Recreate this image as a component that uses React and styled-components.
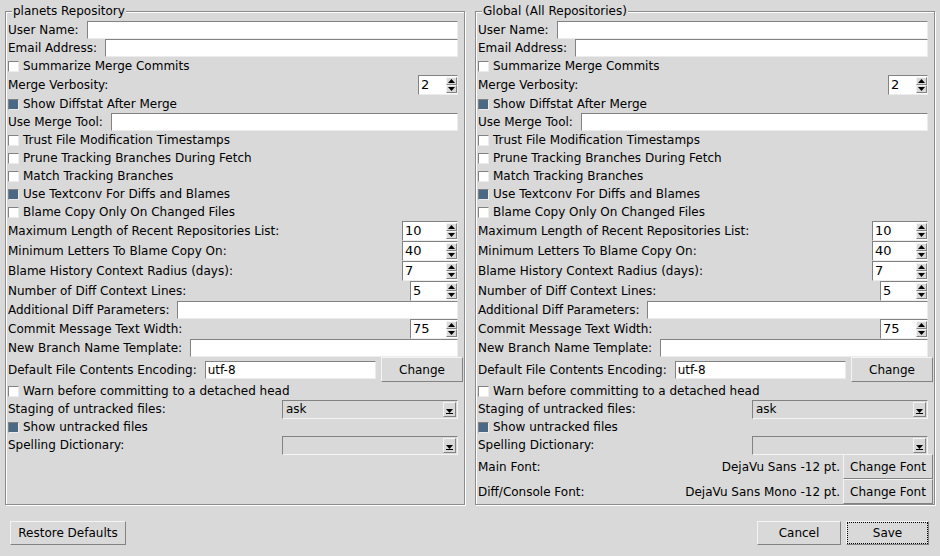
import React from 'react';
import styled, { createGlobalStyle } from 'styled-components';

const GlobalStyle = createGlobalStyle`
  html, body {
    margin: 0;
    padding: 0;
    background: #d9d9d9;
  }
  body {
    font-family: "DejaVu Sans", "Liberation Sans", sans-serif;
    font-size: 12px;
    color: #000;
  }
`;

const Window = styled.div`
  width: 940px;
  height: 556px;
  display: flex;
  flex-direction: column;
  background: #d9d9d9;
  overflow: hidden;
`;

const Panels = styled.div`
  display: flex;
  gap: 10px;
  padding: 11px 0 0 5px;
`;

const Frame = styled.div`
  position: relative;
  box-sizing: border-box;
  width: 460px;
  height: 494px;
  border: 1px solid #8c8c8c;
  box-shadow: 1px 1px 0 #fff, inset 1px 1px 0 #fff;
  padding: 9px 6px 0 2px;
  display: flex;
  flex-direction: column;
`;

const FrameTitle = styled.span`
  position: absolute;
  top: -8px;
  left: 6px;
  padding: 0 1px;
  line-height: 15px;
  background: #d9d9d9;
  white-space: nowrap;
`;

const Row = styled.div`
  display: flex;
  align-items: center;
  height: ${p => p.h}px;
  flex: none;
`;

const Label = styled.span`
  white-space: nowrap;
  flex: ${p => (p.grow ? 1 : 'none')};
  text-align: ${p => (p.right ? 'right' : 'left')};
  padding-right: ${p => (p.right ? 3 : 0)}px;
`;

const Entry = styled.div`
  flex: ${p => (p.w ? 'none' : 1)};
  width: ${p => (p.w ? `${p.w}px` : 'auto')};
  box-sizing: border-box;
  height: 18px;
  margin-left: 8px;
  background: #fff;
  border: 1px solid;
  border-color: #828282 #ececec #ececec #828282;
  padding-left: 2px;
  line-height: 16px;
`;

const CheckRow = styled.label`
  display: flex;
  align-items: center;
  height: ${p => p.h}px;
  flex: none;
`;

const Box = styled.span`
  box-sizing: border-box;
  width: 11px;
  height: 11px;
  margin: 1px 4px 0 0;
  border: 1px solid;
  border-color: #828282 #ececec #ececec #828282;
  background: ${p => (p.on ? '#4a6984' : '#fff')};
`;

const SpinBox = styled.div`
  margin-left: auto;
  box-sizing: border-box;
  width: ${p => p.w}px;
  height: 20px;
  display: flex;
  background: #fff;
  border: 1px solid;
  border-color: #828282 #ececec #ececec #828282;
`;

const SpinValue = styled.span`
  flex: 1;
  padding-left: 2px;
  font-size: 13px;
  line-height: 18px;
`;

const SpinArrows = styled.div`
  width: 11px;
  display: flex;
  flex-direction: column;
  padding: 1px 0;
`;

const ArrowBtn = styled.div`
  flex: 1;
  box-sizing: border-box;
  background: #d9d9d9;
  border: 1px solid;
  border-color: #f4f4f4 #828282 #828282 #f4f4f4;
  display: flex;
  align-items: center;
  justify-content: center;
`;

const Combo = styled.div`
  margin-left: auto;
  box-sizing: border-box;
  width: 176px;
  height: 19px;
  display: flex;
  align-items: stretch;
  border: 1px solid;
  border-color: #828282 #f4f4f4 #f4f4f4 #828282;
  background: #d9d9d9;
`;

const ComboValue = styled.span`
  flex: 1;
  padding-left: 3px;
  line-height: 17px;
`;

const ComboArrow = styled.div`
  width: 13px;
  box-sizing: border-box;
  margin: 1px 1px 1px 0;
  border: 1px solid;
  border-color: #f4f4f4 #828282 #828282 #f4f4f4;
  display: flex;
  align-items: flex-end;
  justify-content: center;
  padding-bottom: 2px;
`;

const Button = styled.button`
  box-sizing: border-box;
  width: ${p => p.w}px;
  height: ${p => p.h || 25}px;
  margin: ${p => p.m || 0};
  padding: 0;
  font: inherit;
  color: #000;
  background: #d9d9d9;
  border: 1px solid;
  border-color: #f4f4f4 #828282 #828282 #f4f4f4;
  outline: ${p => (p.focus ? '1px dotted #000' : 'none')};
  outline-offset: -2px;
  flex: none;
`;

const BottomBar = styled.div`
  display: flex;
  align-items: center;
  margin-top: 16px;
  padding: 0 11px 0 10px;
`;

const Spacer = styled.div`
  flex: 1;
`;

const RightButtons = styled.div`
  display: flex;
  gap: 5px;
`;

const Up = () => (
  <svg width="7" height="4" viewBox="0 0 7 4"><path d="M3.5 0 L7 4 L0 4 Z" fill="#000" /></svg>
);
const Down = () => (
  <svg width="7" height="4" viewBox="0 0 7 4"><path d="M0 0 L7 0 L3.5 4 Z" fill="#000" /></svg>
);
const ComboDown = () => (
  <svg width="7" height="5" viewBox="0 0 7 5"><path d="M0 0 L7 0 L3.5 4 Z M0 4 H7 V5 H0 Z" fill="#000" /></svg>
);

const Spin = ({ label, value, w }) => (
  <Row h={20}>
    <Label>{label}</Label>
    <SpinBox w={w}>
      <SpinValue>{value}</SpinValue>
      <SpinArrows>
        <ArrowBtn><Up /></ArrowBtn>
        <ArrowBtn><Down /></ArrowBtn>
      </SpinArrows>
    </SpinBox>
  </Row>
);

const Field = ({ label }) => (
  <Row h={18}>
    <Label>{label}</Label>
    <Entry />
  </Row>
);

const Check = ({ label, on, h = 18 }) => (
  <CheckRow h={h}>
    <Box on={on} />
    <span>{label}</span>
  </CheckRow>
);

const Select = ({ label, value, h = 18 }) => (
  <Row h={h}>
    <Label>{label}</Label>
    <Combo>
      <ComboValue>{value}</ComboValue>
      <ComboArrow><ComboDown /></ComboArrow>
    </Combo>
  </Row>
);

const Encoding = () => (
  <Row h={25}>
    <Label>Default File Contents Encoding:</Label>
    <Entry>utf-8</Entry>
    <Button w={82} m="0 -5px 0 5px">Change</Button>
  </Row>
);

const FontRow = ({ label, font }) => (
  <Row h={25}>
    <Label>{label}</Label>
    <Label grow right>{font}</Label>
    <Button w={90} m="0 -5px 0 0">Change Font</Button>
  </Row>
);

const Options = ({ global }) => (
  <>
    <Field label="User Name:" />
    <Field label="Email Address:" />
    <Check label="Summarize Merge Commits" />
    <Spin label="Merge Verbosity:" value="2" w={40} />
    <Check label="Show Diffstat After Merge" on />
    <Field label="Use Merge Tool:" />
    <Check label="Trust File Modification Timestamps" />
    <Check label="Prune Tracking Branches During Fetch" />
    <Check label="Match Tracking Branches" />
    <Check label="Use Textconv For Diffs and Blames" on />
    <Check label="Blame Copy Only On Changed Files" />
    <Spin label="Maximum Length of Recent Repositories List:" value="10" w={56} />
    <Spin label="Minimum Letters To Blame Copy On:" value="40" w={56} />
    <Spin label="Blame History Context Radius (days):" value="7" w={56} />
    <Spin label="Number of Diff Context Lines:" value="5" w={48} />
    <Field label="Additional Diff Parameters:" />
    <Spin label="Commit Message Text Width:" value="75" w={48} />
    <Field label="New Branch Name Template:" />
    <Encoding />
    <Check label="Warn before committing to a detached head" />
    <Select label="Staging of untracked files:" value="ask" />
    <Check label="Show untracked files" on />
    <Select label="Spelling Dictionary:" value="" />
    {global && (
      <>
        <FontRow label="Main Font:" font="DejaVu Sans -12 pt." />
        <FontRow label="Diff/Console Font:" font="DejaVu Sans Mono -12 pt." />
      </>
    )}
  </>
);

export default function App() {
  return (
    <Window>
      <GlobalStyle />
      <Panels>
        <Frame>
          <FrameTitle>planets Repository</FrameTitle>
          <Options />
        </Frame>
        <Frame>
          <FrameTitle>Global (All Repositories)</FrameTitle>
          <Options global />
        </Frame>
      </Panels>
      <BottomBar>
        <Button w={116} h={24}>Restore Defaults</Button>
        <Spacer />
        <RightButtons>
          <Button w={84} h={24}>Cancel</Button>
          <Button w={83} h={24} focus>Save</Button>
        </RightButtons>
      </BottomBar>
    </Window>
  );
}
